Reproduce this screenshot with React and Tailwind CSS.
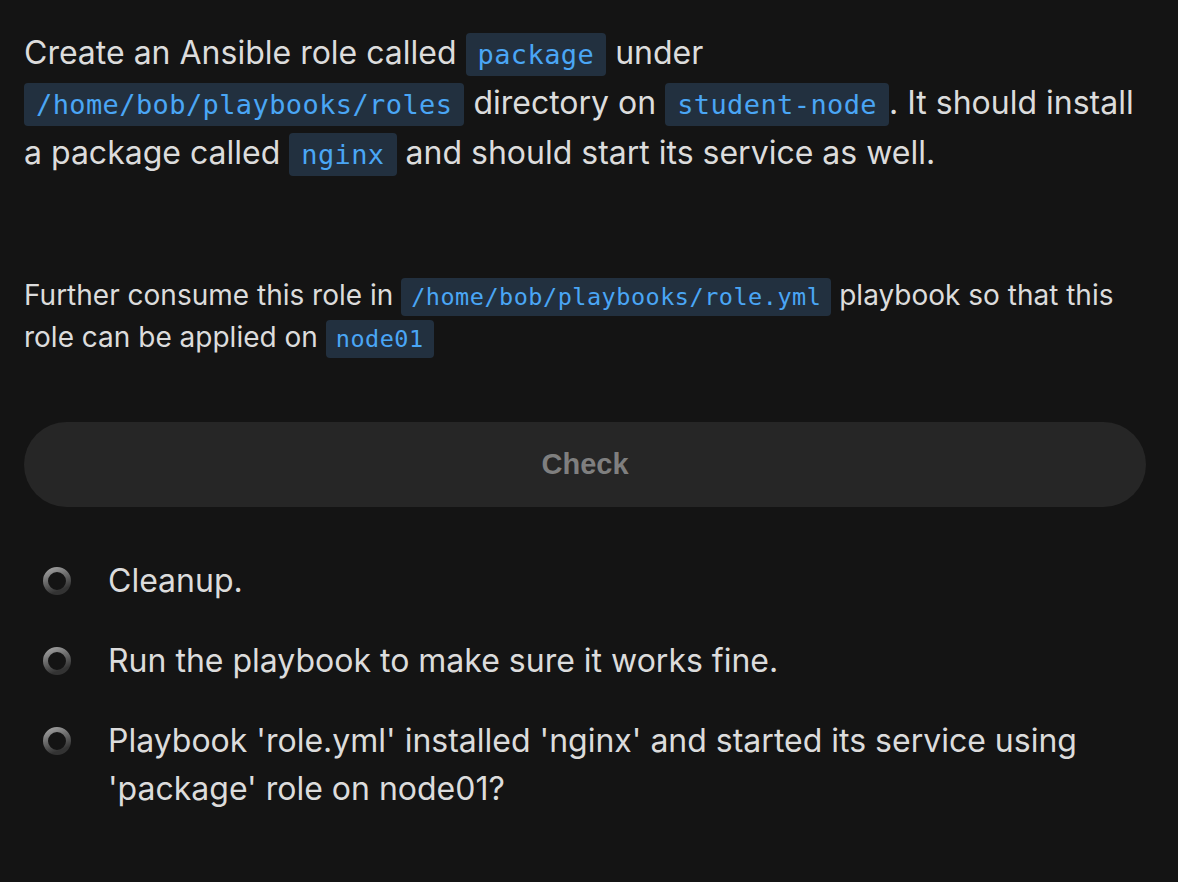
import React from "react";

const Code = ({ children, small }) => (
  <code
    className={
      small
        ? "rounded-[4px] bg-[#22303f] px-[10px] py-[5px] font-['DejaVu_Sans_Mono',monospace] text-[23.5px] leading-none tracking-[0.5px] text-[#4aa6f5]"
        : "rounded-[4px] bg-[#22303f] px-[12px] py-[6px] font-['DejaVu_Sans_Mono',monospace] text-[27px] leading-none tracking-[0.4px] text-[#4aa6f5]"
    }
  >
    {children}
  </code>
);

const Ring = () => (
  <svg width="30" height="30" viewBox="0 0 30 30" className="shrink-0">
    <defs>
      <linearGradient id="ringGrad" x1="0" y1="0" x2="0.4" y2="1">
        <stop offset="0%" stopColor="#a0a0a0" />
        <stop offset="100%" stopColor="#333333" />
      </linearGradient>
    </defs>
    <circle cx="15" cy="15" r="11.5" fill="none" stroke="url(#ringGrad)" strokeWidth="5" />
  </svg>
);

const steps = [
  "Cleanup.",
  "Run the playbook to make sure it works fine.",
  "Playbook 'role.yml' installed 'nginx' and started its service using 'package' role on node01?",
];

export default function App() {
  return (
    <div className="min-h-screen w-full bg-[#141414] font-['Inter','Noto_Sans',sans-serif] text-[#dcdcdc]">
      <div className="w-[1170px] px-6 pt-7 pb-10">
        <p className="text-[32px] leading-[50px]">
          Create an Ansible role called <Code>package</Code> under{" "}
          <Code>/home/bob/playbooks/roles</Code> directory on{" "}
          <Code>student-node</Code>. It should install a package called{" "}
          <Code>nginx</Code> and should start its service as well.
        </p>

        <p className="mt-24 text-[28px] leading-[42px]">
          Further consume this role in{" "}
          <Code small>/home/bob/playbooks/role.yml</Code> playbook so that this
          role can be applied on <Code small>node01</Code>
        </p>

        <button className="mt-16 flex h-[85px] w-full items-center justify-center rounded-full bg-[#262626] font-['Liberation_Sans',sans-serif] text-[29px] font-bold text-[#7f7f7f]">
          Check
        </button>

        <ul className="mt-[50px] flex flex-col gap-8">
          {steps.map((s) => (
            <li key={s} className="flex items-start">
              <div className="ml-[18px] mr-[36px] flex h-[48px] items-center">
                <Ring />
              </div>
              <span className="text-[32px] leading-[48px]">{s}</span>
            </li>
          ))}
        </ul>
      </div>
    </div>
  );
}
